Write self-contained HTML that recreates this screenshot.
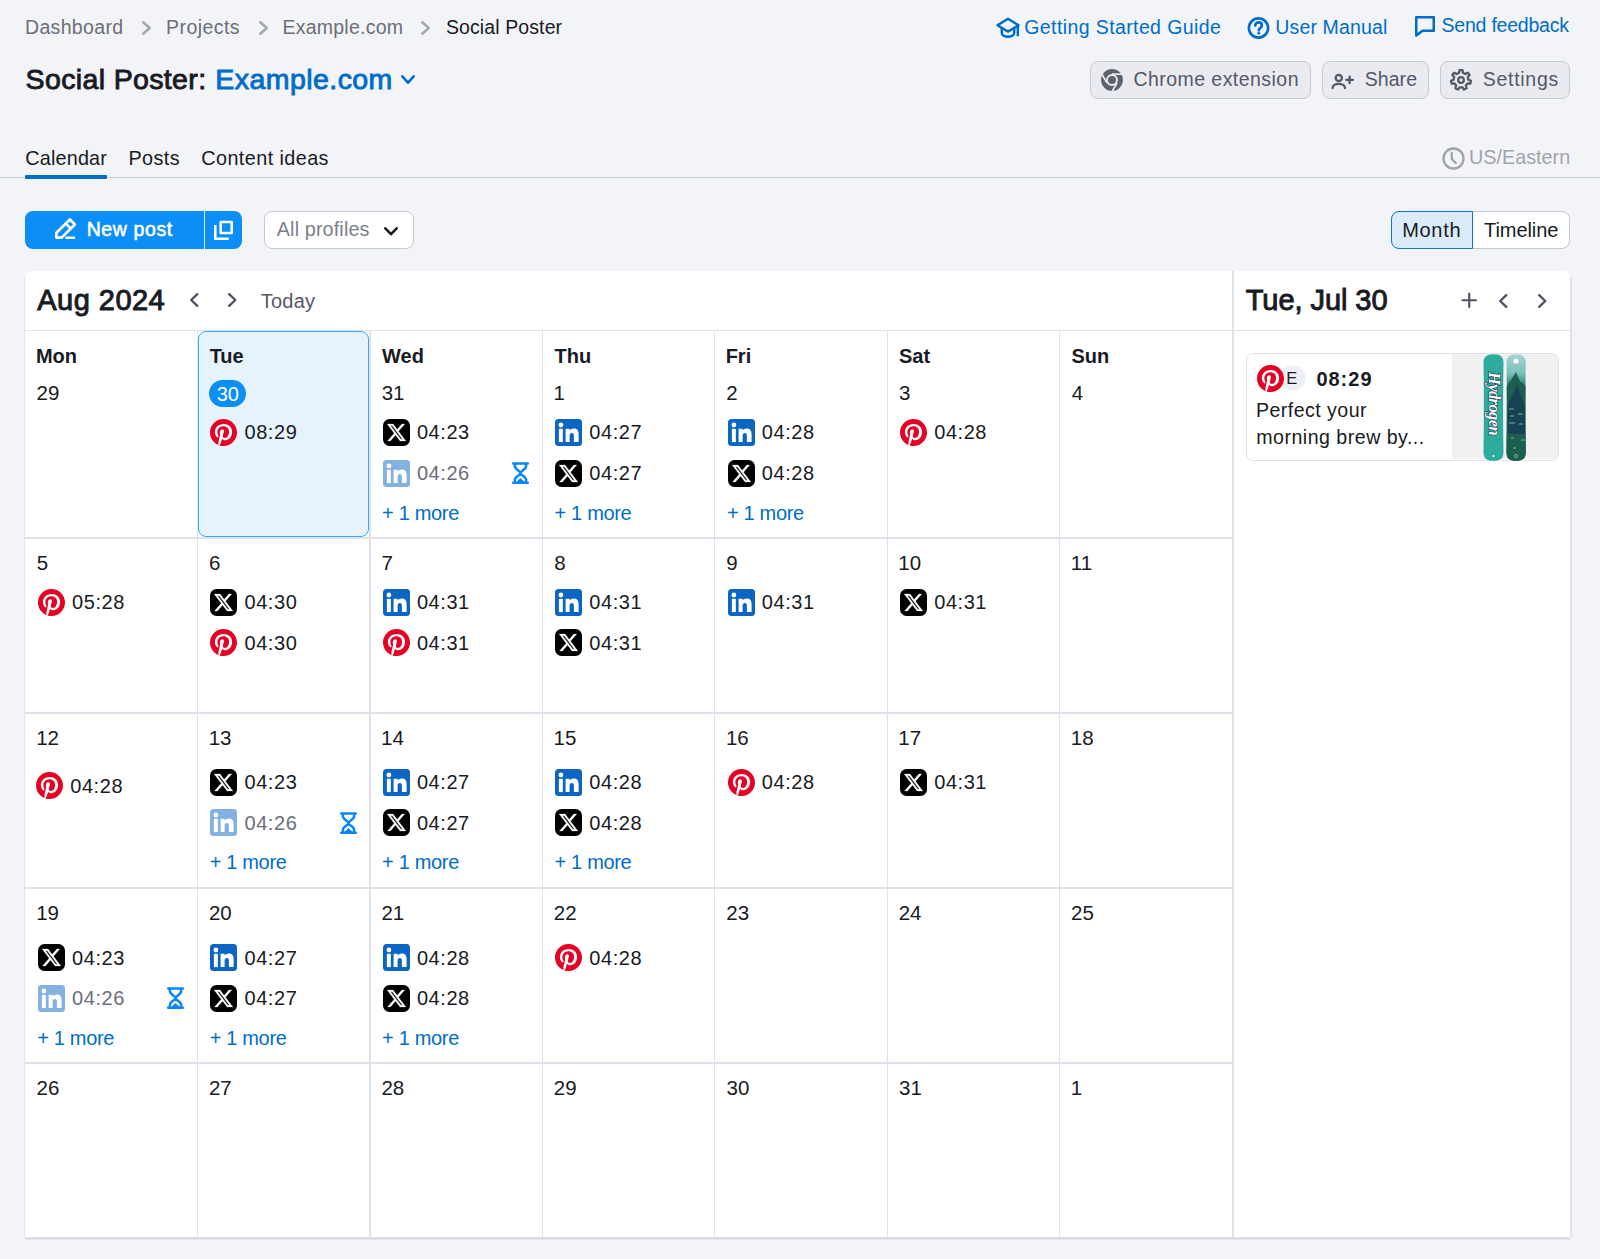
<!DOCTYPE html>
<html><head><meta charset="utf-8"><style>
html,body{margin:0;padding:0;}
body{width:1600px;height:1259px;position:relative;overflow:hidden;background:#f3f4f8;font-family:"Liberation Sans", sans-serif;}
svg{overflow:visible}
</style></head><body>
<svg style="position:absolute;left:142px;top:21px;" width="9" height="14" viewBox="0 0 9 14"><polyline points="1.25,1.25 7.75,7.00 1.25,12.75" fill="none" stroke="#a4a7b0" stroke-width="2.5" stroke-linecap="round" stroke-linejoin="round"/></svg>
<svg style="position:absolute;left:258.5px;top:21px;" width="9" height="14" viewBox="0 0 9 14"><polyline points="1.25,1.25 7.75,7.00 1.25,12.75" fill="none" stroke="#a4a7b0" stroke-width="2.5" stroke-linecap="round" stroke-linejoin="round"/></svg>
<svg style="position:absolute;left:421px;top:21px;" width="9" height="14" viewBox="0 0 9 14"><polyline points="1.25,1.25 7.75,7.00 1.25,12.75" fill="none" stroke="#a4a7b0" stroke-width="2.5" stroke-linecap="round" stroke-linejoin="round"/></svg>
<svg style="position:absolute;left:401px;top:75px;" width="14" height="9" viewBox="0 0 14 9"><polyline points="1.30,1.30 7.00,7.70 12.70,1.30" fill="none" stroke="#006dca" stroke-width="2.6" stroke-linecap="round" stroke-linejoin="round"/></svg>
<svg style="position:absolute;left:996px;top:17px;" width="24" height="21" viewBox="0 0 24 21"><g fill="none" stroke="#006dca" stroke-width="2.5" stroke-linejoin="round" stroke-linecap="round"><path d="M12 1.8L22.5 8.3 12 14.6 1.5 8.3z"/><path d="M5.8 11.2v4.6c0 2.3 2.8 3.9 6.2 3.9s6.2-1.6 6.2-3.9v-4.6"/><path d="M21.8 8.6v9.6"/></g></svg>
<svg style="position:absolute;left:1247px;top:17px;" width="23" height="22" viewBox="0 0 23 22"><g fill="none" stroke="#006dca" stroke-width="2.65" stroke-linecap="round"><circle cx="11.5" cy="11" r="9.6"/><path d="M8.3 8.6c0-1.9 1.5-3.2 3.3-3.2s3.3 1.2 3.3 3c0 2.4-3.1 2.5-3.1 4.9"/></g><circle cx="11.8" cy="16.3" r="1.4" fill="#006dca"/></svg>
<svg style="position:absolute;left:1415px;top:15.5px;" width="20" height="21" viewBox="0 0 20 21"><path d="M1.25 1.25h17.5v13.5H7.5L1.25 19.5z" fill="none" stroke="#006dca" stroke-width="2.5" stroke-linejoin="round"/></svg>
<div style="position:absolute;left:1090px;top:60.5px;width:221px;height:38px;background:#eaebf0;border:1.6px solid #c5c8d0;border-radius:8px;box-sizing:border-box;"></div>
<svg style="position:absolute;left:1101px;top:68.5px;" width="22" height="22" viewBox="0 0 22 22"><circle cx="11" cy="11" r="10.9" fill="#5e616d"/><circle cx="11" cy="11" r="5.9" fill="#eaebf0"/><circle cx="11" cy="11" r="4.0" fill="#5e616d"/><g stroke="#eaebf0" stroke-width="1.7" stroke-linecap="butt"><line x1="11" y1="5.15" x2="23" y2="5.15"/><line x1="16.07" y1="13.93" x2="10.07" y2="24.3"/><line x1="5.93" y1="13.93" x2="-0.07" y2="3.55"/></g></svg>
<div style="position:absolute;left:1321.5px;top:60.5px;width:107px;height:38px;background:#eaebf0;border:1.6px solid #c5c8d0;border-radius:8px;box-sizing:border-box;"></div>
<svg style="position:absolute;left:1331px;top:72.5px;" width="23" height="16" viewBox="0 0 23 16"><g fill="none" stroke="#555866" stroke-width="2.3" stroke-linecap="round"><circle cx="7.8" cy="4.9" r="3.1"/><path d="M1.6 15.2c0-2.6 2.7-4.3 6.2-4.3s6.2 1.7 6.2 4.3"/><path d="M18.6 3.6v6.6M15.3 6.9h6.6"/></g></svg>
<div style="position:absolute;left:1440.2px;top:60.5px;width:129.5px;height:38px;background:#eaebf0;border:1.6px solid #c5c8d0;border-radius:8px;box-sizing:border-box;"></div>
<svg style="position:absolute;left:1450px;top:68.5px;" width="22" height="22" viewBox="0 0 22 22"><g fill="none" stroke="#555866" stroke-width="2.3" stroke-linejoin="round"><polygon points="9.03,3.87 9.48,1.12 12.52,1.12 12.97,3.87 15.35,5.01 17.78,3.65 19.68,6.03 17.80,8.09 18.39,10.67 20.97,11.72 20.30,14.68 17.52,14.51 15.87,16.57 16.66,19.25 13.92,20.56 12.32,18.28 9.68,18.28 8.08,20.56 5.34,19.25 6.13,16.57 4.48,14.51 1.70,14.68 1.03,11.72 3.61,10.67 4.20,8.09 2.32,6.03 4.22,3.65 6.65,5.01"/><circle cx="11" cy="11" r="2.8"/></g></svg>
<div style="position:absolute;left:0px;top:177px;width:1600px;height:1.3px;background:#c9cbd3;"></div>
<div style="position:absolute;left:25.3px;top:175px;width:82px;height:3.6px;background:#006dca;border-radius:1px;"></div>
<svg style="position:absolute;left:1441.5px;top:146.5px;" width="23" height="23" viewBox="0 0 23 23"><g fill="none" stroke="#a0a3ad" stroke-width="2.3" stroke-linecap="round"><circle cx="11.5" cy="11.5" r="10"/><path d="M9.8 5.8v6.2l4 4"/></g></svg>
<div style="position:absolute;left:25px;top:210.5px;width:217px;height:38.5px;background:#0b8ff7;border-radius:8px;"></div>
<div style="position:absolute;left:203.5px;top:210.5px;width:1.3px;height:38.5px;background:#ffffff;opacity:0.9;"></div>
<svg style="position:absolute;left:54px;top:218px;" width="23" height="22" viewBox="0 0 23 22"><g fill="none" stroke="#fff" stroke-width="2.6" stroke-linejoin="round" stroke-linecap="round"><path d="M2.4 19.6v-4.9L15.9 1.5l5 5L7.6 19.6z"/><path d="M12.5 19.8h7.5"/><path d="M11.8 5.6l4.8 4.8"/></g></svg>
<svg style="position:absolute;left:213px;top:219.5px;" width="22" height="21" viewBox="0 0 22 21"><g fill="none" stroke="#fff" stroke-width="2.5" stroke-linejoin="round" stroke-linecap="square"><rect x="7.7" y="1.9" width="11" height="11"/><path d="M2.3 6.2v12.6h12.3"/></g></svg>
<div style="position:absolute;left:264px;top:210.5px;width:150px;height:38.5px;background:#fff;border:1.5px solid #c5c8d0;border-radius:8px;box-sizing:border-box;"></div>
<svg style="position:absolute;left:384.4px;top:227px;" width="14" height="8.5" viewBox="0 0 14 8.5"><polyline points="1.30,1.30 7.00,7.20 12.70,1.30" fill="none" stroke="#181b23" stroke-width="2.6" stroke-linecap="round" stroke-linejoin="round"/></svg>
<div style="position:absolute;left:1391px;top:210.5px;width:179px;height:38.5px;background:#fff;border:1.5px solid #c5c8d0;border-radius:8px;box-sizing:border-box;"></div>
<div style="position:absolute;left:1391px;top:210.5px;width:82px;height:38.5px;background:#dcebfa;border:1.8px solid #1a73d0;border-radius:8px 0 0 8px;box-sizing:border-box;"></div>
<div style="position:absolute;left:25px;top:1236.5px;width:1545px;height:3px;background:linear-gradient(#e2e3ea,#d8d9e1 50%,#eceef3);"></div>
<div style="position:absolute;left:23.8px;top:277px;width:1.5px;height:960px;background:#e4e5eb;"></div>
<div style="position:absolute;left:1569.8px;top:277px;width:1.8px;height:960px;background:#e1e2e9;"></div>
<div style="position:absolute;left:25px;top:271px;width:1545px;height:966px;background:#fff;border-radius:6px 6px 0 0;"></div>
<div style="position:absolute;left:25px;top:330px;width:1545px;height:1.3px;background:#e0e1e9;"></div>
<div style="position:absolute;left:1232.3px;top:271px;width:1.6px;height:966px;background:#e0e1e9;"></div>
<svg style="position:absolute;left:190px;top:293px;" width="8.5" height="14" viewBox="0 0 8.5 14"><polyline points="7.30,1.20 1.20,7.00 7.30,12.80" fill="none" stroke="#50535f" stroke-width="2.4" stroke-linecap="round" stroke-linejoin="round"/></svg>
<svg style="position:absolute;left:228px;top:293px;" width="8.5" height="14" viewBox="0 0 8.5 14"><polyline points="1.20,1.20 7.30,7.00 1.20,12.80" fill="none" stroke="#50535f" stroke-width="2.4" stroke-linecap="round" stroke-linejoin="round"/></svg>
<svg style="position:absolute;left:1461.5px;top:293px;" width="14.5" height="14.5" viewBox="0 0 14.5 14.5"><path d="M7.25 0.5v13.5M0.5 7.25h13.5" stroke="#50535f" stroke-width="2.2" stroke-linecap="round"/></svg>
<svg style="position:absolute;left:1499px;top:293.5px;" width="8.5" height="14" viewBox="0 0 8.5 14"><polyline points="7.30,1.20 1.20,7.00 7.30,12.80" fill="none" stroke="#50535f" stroke-width="2.4" stroke-linecap="round" stroke-linejoin="round"/></svg>
<svg style="position:absolute;left:1537.5px;top:293.5px;" width="8.5" height="14" viewBox="0 0 8.5 14"><polyline points="1.20,1.20 7.30,7.00 1.20,12.80" fill="none" stroke="#50535f" stroke-width="2.4" stroke-linecap="round" stroke-linejoin="round"/></svg>
<div style="position:absolute;left:196.78px;top:330px;width:1.3px;height:907px;background:#e0e1e9;"></div>
<div style="position:absolute;left:369.21000000000004px;top:330px;width:1.3px;height:907px;background:#e0e1e9;"></div>
<div style="position:absolute;left:541.64px;top:330px;width:1.3px;height:907px;background:#e0e1e9;"></div>
<div style="position:absolute;left:714.07px;top:330px;width:1.3px;height:907px;background:#e0e1e9;"></div>
<div style="position:absolute;left:886.5000000000001px;top:330px;width:1.3px;height:907px;background:#e0e1e9;"></div>
<div style="position:absolute;left:1058.9299999999998px;top:330px;width:1.3px;height:907px;background:#e0e1e9;"></div>
<div style="position:absolute;left:25px;top:537.35px;width:1207.5px;height:1.3px;background:#e0e1e9;"></div>
<div style="position:absolute;left:25px;top:712.35px;width:1207.5px;height:1.3px;background:#e0e1e9;"></div>
<div style="position:absolute;left:25px;top:887.35px;width:1207.5px;height:1.3px;background:#e0e1e9;"></div>
<div style="position:absolute;left:25px;top:1062.35px;width:1207.5px;height:1.3px;background:#e0e1e9;"></div>
<div style="position:absolute;left:198px;top:331px;width:171px;height:205.7px;background:#e7f3fc;border:1.8px solid #36aaf9;border-radius:8px;box-sizing:border-box;"></div>
<div style="position:absolute;left:209px;top:379.5px;width:37px;height:27.5px;background:#0b8ff7;border-radius:14px;"></div>
<svg style="position:absolute;left:210.43px;top:418.7px;" width="27" height="27" viewBox="0 0 24 24"><circle cx="12" cy="12" r="11.6" fill="#fff"/><path d="M12 0C5.373 0 0 5.372 0 12c0 5.084 3.163 9.426 7.627 11.174-.105-.949-.2-2.405.042-3.441.218-.937 1.407-5.965 1.407-5.965s-.359-.719-.359-1.782c0-1.668.967-2.914 2.171-2.914 1.023 0 1.518.769 1.518 1.69 0 1.029-.655 2.568-.994 3.995-.283 1.194.599 2.169 1.777 2.169 2.133 0 3.772-2.249 3.772-5.495 0-2.873-2.064-4.882-5.012-4.882-3.414 0-5.418 2.561-5.418 5.207 0 1.031.397 2.138.893 2.738a.36.36 0 01.083.345l-.333 1.36c-.053.22-.174.267-.402.161-1.499-.698-2.436-2.889-2.436-4.649 0-3.785 2.75-7.262 7.929-7.262 4.163 0 7.398 2.967 7.398 6.931 0 4.136-2.607 7.464-6.227 7.464-1.216 0-2.359-.632-2.75-1.378l-.748 2.853c-.271 1.043-1.002 2.35-1.492 3.146C9.57 23.812 10.763 24 12 24c6.627 0 12-5.373 12-12 0-6.628-5.373-12-12-12z" fill="#e60023"/></svg>
<svg style="position:absolute;left:382.86px;top:418.7px;" width="27" height="27" viewBox="0 0 27 27"><rect x="0" y="0" width="27" height="27" rx="6.5" fill="#000"/><g transform="translate(3.12 3.16) scale(0.862)"><path d="M18.244 2.25h3.308l-7.227 8.26 8.502 11.24H16.17l-5.214-6.817L4.99 21.75H1.68l7.73-8.835L1.254 2.25H8.08l4.713 6.231zm-1.161 17.52h1.833L7.084 4.126H5.117z" fill="#fff" stroke="#fff" stroke-width="0.35"/></g></svg>
<svg style="position:absolute;left:382.86px;top:459.7px;" width="27" height="27" viewBox="0 0 27 27"><g opacity="0.5"><rect x="0" y="0" width="27" height="27" rx="3.5" fill="#0a66c2"/><circle cx="5.9" cy="6.0" r="2.4" fill="#fff"/><rect x="3.9" y="9.8" width="3.95" height="13.3" fill="#fff"/><path d="M10.6 9.8h4v1.8c.6-1.1 2-2.1 4.1-2.1 4 0 4.9 2.6 4.9 6.1V23.1h-4.7v-6.2c0-1.5-.2-3-2-3s-2.3 1.4-2.3 3V23.1h-4z" fill="#fff"/></g></svg>
<svg style="position:absolute;left:511.98999999999995px;top:462.0px;" width="17" height="22" viewBox="0 0 17 22"><g fill="none" stroke="#0a86f6" stroke-width="2.5" stroke-linecap="round" stroke-linejoin="round"><path d="M1.2 1.5h14.6M1.2 20.8h14.6"/><path d="M2.9 2v2.4c0 2.6 5.6 4.6 5.6 6.6s-5.6 4-5.6 6.6V20.5M14.1 2v2.4c0 2.6-5.6 4.6-5.6 6.6s5.6 4 5.6 6.6V20.5"/><path d="M5.6 19.8l2.9-2.6 2.9 2.6z" fill="#0a86f6" stroke-width="1.6"/></g></svg>
<svg style="position:absolute;left:555.29px;top:418.7px;" width="27" height="27" viewBox="0 0 27 27"><g><rect x="0" y="0" width="27" height="27" rx="3.5" fill="#0a66c2"/><circle cx="5.9" cy="6.0" r="2.4" fill="#fff"/><rect x="3.9" y="9.8" width="3.95" height="13.3" fill="#fff"/><path d="M10.6 9.8h4v1.8c.6-1.1 2-2.1 4.1-2.1 4 0 4.9 2.6 4.9 6.1V23.1h-4.7v-6.2c0-1.5-.2-3-2-3s-2.3 1.4-2.3 3V23.1h-4z" fill="#fff"/></g></svg>
<svg style="position:absolute;left:555.29px;top:459.7px;" width="27" height="27" viewBox="0 0 27 27"><rect x="0" y="0" width="27" height="27" rx="6.5" fill="#000"/><g transform="translate(3.12 3.16) scale(0.862)"><path d="M18.244 2.25h3.308l-7.227 8.26 8.502 11.24H16.17l-5.214-6.817L4.99 21.75H1.68l7.73-8.835L1.254 2.25H8.08l4.713 6.231zm-1.161 17.52h1.833L7.084 4.126H5.117z" fill="#fff" stroke="#fff" stroke-width="0.35"/></g></svg>
<svg style="position:absolute;left:727.72px;top:418.7px;" width="27" height="27" viewBox="0 0 27 27"><g><rect x="0" y="0" width="27" height="27" rx="3.5" fill="#0a66c2"/><circle cx="5.9" cy="6.0" r="2.4" fill="#fff"/><rect x="3.9" y="9.8" width="3.95" height="13.3" fill="#fff"/><path d="M10.6 9.8h4v1.8c.6-1.1 2-2.1 4.1-2.1 4 0 4.9 2.6 4.9 6.1V23.1h-4.7v-6.2c0-1.5-.2-3-2-3s-2.3 1.4-2.3 3V23.1h-4z" fill="#fff"/></g></svg>
<svg style="position:absolute;left:727.72px;top:459.7px;" width="27" height="27" viewBox="0 0 27 27"><rect x="0" y="0" width="27" height="27" rx="6.5" fill="#000"/><g transform="translate(3.12 3.16) scale(0.862)"><path d="M18.244 2.25h3.308l-7.227 8.26 8.502 11.24H16.17l-5.214-6.817L4.99 21.75H1.68l7.73-8.835L1.254 2.25H8.08l4.713 6.231zm-1.161 17.52h1.833L7.084 4.126H5.117z" fill="#fff" stroke="#fff" stroke-width="0.35"/></g></svg>
<svg style="position:absolute;left:900.1500000000001px;top:418.7px;" width="27" height="27" viewBox="0 0 24 24"><circle cx="12" cy="12" r="11.6" fill="#fff"/><path d="M12 0C5.373 0 0 5.372 0 12c0 5.084 3.163 9.426 7.627 11.174-.105-.949-.2-2.405.042-3.441.218-.937 1.407-5.965 1.407-5.965s-.359-.719-.359-1.782c0-1.668.967-2.914 2.171-2.914 1.023 0 1.518.769 1.518 1.69 0 1.029-.655 2.568-.994 3.995-.283 1.194.599 2.169 1.777 2.169 2.133 0 3.772-2.249 3.772-5.495 0-2.873-2.064-4.882-5.012-4.882-3.414 0-5.418 2.561-5.418 5.207 0 1.031.397 2.138.893 2.738a.36.36 0 01.083.345l-.333 1.36c-.053.22-.174.267-.402.161-1.499-.698-2.436-2.889-2.436-4.649 0-3.785 2.75-7.262 7.929-7.262 4.163 0 7.398 2.967 7.398 6.931 0 4.136-2.607 7.464-6.227 7.464-1.216 0-2.359-.632-2.75-1.378l-.748 2.853c-.271 1.043-1.002 2.35-1.492 3.146C9.57 23.812 10.763 24 12 24c6.627 0 12-5.373 12-12 0-6.628-5.373-12-12-12z" fill="#e60023"/></svg>
<svg style="position:absolute;left:38.0px;top:588.6px;" width="27" height="27" viewBox="0 0 24 24"><circle cx="12" cy="12" r="11.6" fill="#fff"/><path d="M12 0C5.373 0 0 5.372 0 12c0 5.084 3.163 9.426 7.627 11.174-.105-.949-.2-2.405.042-3.441.218-.937 1.407-5.965 1.407-5.965s-.359-.719-.359-1.782c0-1.668.967-2.914 2.171-2.914 1.023 0 1.518.769 1.518 1.69 0 1.029-.655 2.568-.994 3.995-.283 1.194.599 2.169 1.777 2.169 2.133 0 3.772-2.249 3.772-5.495 0-2.873-2.064-4.882-5.012-4.882-3.414 0-5.418 2.561-5.418 5.207 0 1.031.397 2.138.893 2.738a.36.36 0 01.083.345l-.333 1.36c-.053.22-.174.267-.402.161-1.499-.698-2.436-2.889-2.436-4.649 0-3.785 2.75-7.262 7.929-7.262 4.163 0 7.398 2.967 7.398 6.931 0 4.136-2.607 7.464-6.227 7.464-1.216 0-2.359-.632-2.75-1.378l-.748 2.853c-.271 1.043-1.002 2.35-1.492 3.146C9.57 23.812 10.763 24 12 24c6.627 0 12-5.373 12-12 0-6.628-5.373-12-12-12z" fill="#e60023"/></svg>
<svg style="position:absolute;left:210.43px;top:588.6px;" width="27" height="27" viewBox="0 0 27 27"><rect x="0" y="0" width="27" height="27" rx="6.5" fill="#000"/><g transform="translate(3.12 3.16) scale(0.862)"><path d="M18.244 2.25h3.308l-7.227 8.26 8.502 11.24H16.17l-5.214-6.817L4.99 21.75H1.68l7.73-8.835L1.254 2.25H8.08l4.713 6.231zm-1.161 17.52h1.833L7.084 4.126H5.117z" fill="#fff" stroke="#fff" stroke-width="0.35"/></g></svg>
<svg style="position:absolute;left:210.43px;top:629.4px;" width="27" height="27" viewBox="0 0 24 24"><circle cx="12" cy="12" r="11.6" fill="#fff"/><path d="M12 0C5.373 0 0 5.372 0 12c0 5.084 3.163 9.426 7.627 11.174-.105-.949-.2-2.405.042-3.441.218-.937 1.407-5.965 1.407-5.965s-.359-.719-.359-1.782c0-1.668.967-2.914 2.171-2.914 1.023 0 1.518.769 1.518 1.69 0 1.029-.655 2.568-.994 3.995-.283 1.194.599 2.169 1.777 2.169 2.133 0 3.772-2.249 3.772-5.495 0-2.873-2.064-4.882-5.012-4.882-3.414 0-5.418 2.561-5.418 5.207 0 1.031.397 2.138.893 2.738a.36.36 0 01.083.345l-.333 1.36c-.053.22-.174.267-.402.161-1.499-.698-2.436-2.889-2.436-4.649 0-3.785 2.75-7.262 7.929-7.262 4.163 0 7.398 2.967 7.398 6.931 0 4.136-2.607 7.464-6.227 7.464-1.216 0-2.359-.632-2.75-1.378l-.748 2.853c-.271 1.043-1.002 2.35-1.492 3.146C9.57 23.812 10.763 24 12 24c6.627 0 12-5.373 12-12 0-6.628-5.373-12-12-12z" fill="#e60023"/></svg>
<svg style="position:absolute;left:382.86px;top:588.6px;" width="27" height="27" viewBox="0 0 27 27"><g><rect x="0" y="0" width="27" height="27" rx="3.5" fill="#0a66c2"/><circle cx="5.9" cy="6.0" r="2.4" fill="#fff"/><rect x="3.9" y="9.8" width="3.95" height="13.3" fill="#fff"/><path d="M10.6 9.8h4v1.8c.6-1.1 2-2.1 4.1-2.1 4 0 4.9 2.6 4.9 6.1V23.1h-4.7v-6.2c0-1.5-.2-3-2-3s-2.3 1.4-2.3 3V23.1h-4z" fill="#fff"/></g></svg>
<svg style="position:absolute;left:382.86px;top:629.4px;" width="27" height="27" viewBox="0 0 24 24"><circle cx="12" cy="12" r="11.6" fill="#fff"/><path d="M12 0C5.373 0 0 5.372 0 12c0 5.084 3.163 9.426 7.627 11.174-.105-.949-.2-2.405.042-3.441.218-.937 1.407-5.965 1.407-5.965s-.359-.719-.359-1.782c0-1.668.967-2.914 2.171-2.914 1.023 0 1.518.769 1.518 1.69 0 1.029-.655 2.568-.994 3.995-.283 1.194.599 2.169 1.777 2.169 2.133 0 3.772-2.249 3.772-5.495 0-2.873-2.064-4.882-5.012-4.882-3.414 0-5.418 2.561-5.418 5.207 0 1.031.397 2.138.893 2.738a.36.36 0 01.083.345l-.333 1.36c-.053.22-.174.267-.402.161-1.499-.698-2.436-2.889-2.436-4.649 0-3.785 2.75-7.262 7.929-7.262 4.163 0 7.398 2.967 7.398 6.931 0 4.136-2.607 7.464-6.227 7.464-1.216 0-2.359-.632-2.75-1.378l-.748 2.853c-.271 1.043-1.002 2.35-1.492 3.146C9.57 23.812 10.763 24 12 24c6.627 0 12-5.373 12-12 0-6.628-5.373-12-12-12z" fill="#e60023"/></svg>
<svg style="position:absolute;left:555.29px;top:588.6px;" width="27" height="27" viewBox="0 0 27 27"><g><rect x="0" y="0" width="27" height="27" rx="3.5" fill="#0a66c2"/><circle cx="5.9" cy="6.0" r="2.4" fill="#fff"/><rect x="3.9" y="9.8" width="3.95" height="13.3" fill="#fff"/><path d="M10.6 9.8h4v1.8c.6-1.1 2-2.1 4.1-2.1 4 0 4.9 2.6 4.9 6.1V23.1h-4.7v-6.2c0-1.5-.2-3-2-3s-2.3 1.4-2.3 3V23.1h-4z" fill="#fff"/></g></svg>
<svg style="position:absolute;left:555.29px;top:629.4px;" width="27" height="27" viewBox="0 0 27 27"><rect x="0" y="0" width="27" height="27" rx="6.5" fill="#000"/><g transform="translate(3.12 3.16) scale(0.862)"><path d="M18.244 2.25h3.308l-7.227 8.26 8.502 11.24H16.17l-5.214-6.817L4.99 21.75H1.68l7.73-8.835L1.254 2.25H8.08l4.713 6.231zm-1.161 17.52h1.833L7.084 4.126H5.117z" fill="#fff" stroke="#fff" stroke-width="0.35"/></g></svg>
<svg style="position:absolute;left:727.72px;top:588.6px;" width="27" height="27" viewBox="0 0 27 27"><g><rect x="0" y="0" width="27" height="27" rx="3.5" fill="#0a66c2"/><circle cx="5.9" cy="6.0" r="2.4" fill="#fff"/><rect x="3.9" y="9.8" width="3.95" height="13.3" fill="#fff"/><path d="M10.6 9.8h4v1.8c.6-1.1 2-2.1 4.1-2.1 4 0 4.9 2.6 4.9 6.1V23.1h-4.7v-6.2c0-1.5-.2-3-2-3s-2.3 1.4-2.3 3V23.1h-4z" fill="#fff"/></g></svg>
<svg style="position:absolute;left:900.1500000000001px;top:588.6px;" width="27" height="27" viewBox="0 0 27 27"><rect x="0" y="0" width="27" height="27" rx="6.5" fill="#000"/><g transform="translate(3.12 3.16) scale(0.862)"><path d="M18.244 2.25h3.308l-7.227 8.26 8.502 11.24H16.17l-5.214-6.817L4.99 21.75H1.68l7.73-8.835L1.254 2.25H8.08l4.713 6.231zm-1.161 17.52h1.833L7.084 4.126H5.117z" fill="#fff" stroke="#fff" stroke-width="0.35"/></g></svg>
<svg style="position:absolute;left:36.2px;top:772.4px;" width="27" height="27" viewBox="0 0 24 24"><circle cx="12" cy="12" r="11.6" fill="#fff"/><path d="M12 0C5.373 0 0 5.372 0 12c0 5.084 3.163 9.426 7.627 11.174-.105-.949-.2-2.405.042-3.441.218-.937 1.407-5.965 1.407-5.965s-.359-.719-.359-1.782c0-1.668.967-2.914 2.171-2.914 1.023 0 1.518.769 1.518 1.69 0 1.029-.655 2.568-.994 3.995-.283 1.194.599 2.169 1.777 2.169 2.133 0 3.772-2.249 3.772-5.495 0-2.873-2.064-4.882-5.012-4.882-3.414 0-5.418 2.561-5.418 5.207 0 1.031.397 2.138.893 2.738a.36.36 0 01.083.345l-.333 1.36c-.053.22-.174.267-.402.161-1.499-.698-2.436-2.889-2.436-4.649 0-3.785 2.75-7.262 7.929-7.262 4.163 0 7.398 2.967 7.398 6.931 0 4.136-2.607 7.464-6.227 7.464-1.216 0-2.359-.632-2.75-1.378l-.748 2.853c-.271 1.043-1.002 2.35-1.492 3.146C9.57 23.812 10.763 24 12 24c6.627 0 12-5.373 12-12 0-6.628-5.373-12-12-12z" fill="#e60023"/></svg>
<svg style="position:absolute;left:210.43px;top:768.5px;" width="27" height="27" viewBox="0 0 27 27"><rect x="0" y="0" width="27" height="27" rx="6.5" fill="#000"/><g transform="translate(3.12 3.16) scale(0.862)"><path d="M18.244 2.25h3.308l-7.227 8.26 8.502 11.24H16.17l-5.214-6.817L4.99 21.75H1.68l7.73-8.835L1.254 2.25H8.08l4.713 6.231zm-1.161 17.52h1.833L7.084 4.126H5.117z" fill="#fff" stroke="#fff" stroke-width="0.35"/></g></svg>
<svg style="position:absolute;left:210.43px;top:809.4px;" width="27" height="27" viewBox="0 0 27 27"><g opacity="0.5"><rect x="0" y="0" width="27" height="27" rx="3.5" fill="#0a66c2"/><circle cx="5.9" cy="6.0" r="2.4" fill="#fff"/><rect x="3.9" y="9.8" width="3.95" height="13.3" fill="#fff"/><path d="M10.6 9.8h4v1.8c.6-1.1 2-2.1 4.1-2.1 4 0 4.9 2.6 4.9 6.1V23.1h-4.7v-6.2c0-1.5-.2-3-2-3s-2.3 1.4-2.3 3V23.1h-4z" fill="#fff"/></g></svg>
<svg style="position:absolute;left:339.56px;top:811.6999999999999px;" width="17" height="22" viewBox="0 0 17 22"><g fill="none" stroke="#0a86f6" stroke-width="2.5" stroke-linecap="round" stroke-linejoin="round"><path d="M1.2 1.5h14.6M1.2 20.8h14.6"/><path d="M2.9 2v2.4c0 2.6 5.6 4.6 5.6 6.6s-5.6 4-5.6 6.6V20.5M14.1 2v2.4c0 2.6-5.6 4.6-5.6 6.6s5.6 4 5.6 6.6V20.5"/><path d="M5.6 19.8l2.9-2.6 2.9 2.6z" fill="#0a86f6" stroke-width="1.6"/></g></svg>
<svg style="position:absolute;left:382.86px;top:768.5px;" width="27" height="27" viewBox="0 0 27 27"><g><rect x="0" y="0" width="27" height="27" rx="3.5" fill="#0a66c2"/><circle cx="5.9" cy="6.0" r="2.4" fill="#fff"/><rect x="3.9" y="9.8" width="3.95" height="13.3" fill="#fff"/><path d="M10.6 9.8h4v1.8c.6-1.1 2-2.1 4.1-2.1 4 0 4.9 2.6 4.9 6.1V23.1h-4.7v-6.2c0-1.5-.2-3-2-3s-2.3 1.4-2.3 3V23.1h-4z" fill="#fff"/></g></svg>
<svg style="position:absolute;left:382.86px;top:809.4px;" width="27" height="27" viewBox="0 0 27 27"><rect x="0" y="0" width="27" height="27" rx="6.5" fill="#000"/><g transform="translate(3.12 3.16) scale(0.862)"><path d="M18.244 2.25h3.308l-7.227 8.26 8.502 11.24H16.17l-5.214-6.817L4.99 21.75H1.68l7.73-8.835L1.254 2.25H8.08l4.713 6.231zm-1.161 17.52h1.833L7.084 4.126H5.117z" fill="#fff" stroke="#fff" stroke-width="0.35"/></g></svg>
<svg style="position:absolute;left:555.29px;top:768.5px;" width="27" height="27" viewBox="0 0 27 27"><g><rect x="0" y="0" width="27" height="27" rx="3.5" fill="#0a66c2"/><circle cx="5.9" cy="6.0" r="2.4" fill="#fff"/><rect x="3.9" y="9.8" width="3.95" height="13.3" fill="#fff"/><path d="M10.6 9.8h4v1.8c.6-1.1 2-2.1 4.1-2.1 4 0 4.9 2.6 4.9 6.1V23.1h-4.7v-6.2c0-1.5-.2-3-2-3s-2.3 1.4-2.3 3V23.1h-4z" fill="#fff"/></g></svg>
<svg style="position:absolute;left:555.29px;top:809.4px;" width="27" height="27" viewBox="0 0 27 27"><rect x="0" y="0" width="27" height="27" rx="6.5" fill="#000"/><g transform="translate(3.12 3.16) scale(0.862)"><path d="M18.244 2.25h3.308l-7.227 8.26 8.502 11.24H16.17l-5.214-6.817L4.99 21.75H1.68l7.73-8.835L1.254 2.25H8.08l4.713 6.231zm-1.161 17.52h1.833L7.084 4.126H5.117z" fill="#fff" stroke="#fff" stroke-width="0.35"/></g></svg>
<svg style="position:absolute;left:727.72px;top:768.5px;" width="27" height="27" viewBox="0 0 24 24"><circle cx="12" cy="12" r="11.6" fill="#fff"/><path d="M12 0C5.373 0 0 5.372 0 12c0 5.084 3.163 9.426 7.627 11.174-.105-.949-.2-2.405.042-3.441.218-.937 1.407-5.965 1.407-5.965s-.359-.719-.359-1.782c0-1.668.967-2.914 2.171-2.914 1.023 0 1.518.769 1.518 1.69 0 1.029-.655 2.568-.994 3.995-.283 1.194.599 2.169 1.777 2.169 2.133 0 3.772-2.249 3.772-5.495 0-2.873-2.064-4.882-5.012-4.882-3.414 0-5.418 2.561-5.418 5.207 0 1.031.397 2.138.893 2.738a.36.36 0 01.083.345l-.333 1.36c-.053.22-.174.267-.402.161-1.499-.698-2.436-2.889-2.436-4.649 0-3.785 2.75-7.262 7.929-7.262 4.163 0 7.398 2.967 7.398 6.931 0 4.136-2.607 7.464-6.227 7.464-1.216 0-2.359-.632-2.75-1.378l-.748 2.853c-.271 1.043-1.002 2.35-1.492 3.146C9.57 23.812 10.763 24 12 24c6.627 0 12-5.373 12-12 0-6.628-5.373-12-12-12z" fill="#e60023"/></svg>
<svg style="position:absolute;left:900.1500000000001px;top:768.5px;" width="27" height="27" viewBox="0 0 27 27"><rect x="0" y="0" width="27" height="27" rx="6.5" fill="#000"/><g transform="translate(3.12 3.16) scale(0.862)"><path d="M18.244 2.25h3.308l-7.227 8.26 8.502 11.24H16.17l-5.214-6.817L4.99 21.75H1.68l7.73-8.835L1.254 2.25H8.08l4.713 6.231zm-1.161 17.52h1.833L7.084 4.126H5.117z" fill="#fff" stroke="#fff" stroke-width="0.35"/></g></svg>
<svg style="position:absolute;left:38.0px;top:943.8px;" width="27" height="27" viewBox="0 0 27 27"><rect x="0" y="0" width="27" height="27" rx="6.5" fill="#000"/><g transform="translate(3.12 3.16) scale(0.862)"><path d="M18.244 2.25h3.308l-7.227 8.26 8.502 11.24H16.17l-5.214-6.817L4.99 21.75H1.68l7.73-8.835L1.254 2.25H8.08l4.713 6.231zm-1.161 17.52h1.833L7.084 4.126H5.117z" fill="#fff" stroke="#fff" stroke-width="0.35"/></g></svg>
<svg style="position:absolute;left:38.0px;top:984.6px;" width="27" height="27" viewBox="0 0 27 27"><g opacity="0.5"><rect x="0" y="0" width="27" height="27" rx="3.5" fill="#0a66c2"/><circle cx="5.9" cy="6.0" r="2.4" fill="#fff"/><rect x="3.9" y="9.8" width="3.95" height="13.3" fill="#fff"/><path d="M10.6 9.8h4v1.8c.6-1.1 2-2.1 4.1-2.1 4 0 4.9 2.6 4.9 6.1V23.1h-4.7v-6.2c0-1.5-.2-3-2-3s-2.3 1.4-2.3 3V23.1h-4z" fill="#fff"/></g></svg>
<svg style="position:absolute;left:167.13px;top:986.9px;" width="17" height="22" viewBox="0 0 17 22"><g fill="none" stroke="#0a86f6" stroke-width="2.5" stroke-linecap="round" stroke-linejoin="round"><path d="M1.2 1.5h14.6M1.2 20.8h14.6"/><path d="M2.9 2v2.4c0 2.6 5.6 4.6 5.6 6.6s-5.6 4-5.6 6.6V20.5M14.1 2v2.4c0 2.6-5.6 4.6-5.6 6.6s5.6 4 5.6 6.6V20.5"/><path d="M5.6 19.8l2.9-2.6 2.9 2.6z" fill="#0a86f6" stroke-width="1.6"/></g></svg>
<svg style="position:absolute;left:210.43px;top:943.8px;" width="27" height="27" viewBox="0 0 27 27"><g><rect x="0" y="0" width="27" height="27" rx="3.5" fill="#0a66c2"/><circle cx="5.9" cy="6.0" r="2.4" fill="#fff"/><rect x="3.9" y="9.8" width="3.95" height="13.3" fill="#fff"/><path d="M10.6 9.8h4v1.8c.6-1.1 2-2.1 4.1-2.1 4 0 4.9 2.6 4.9 6.1V23.1h-4.7v-6.2c0-1.5-.2-3-2-3s-2.3 1.4-2.3 3V23.1h-4z" fill="#fff"/></g></svg>
<svg style="position:absolute;left:210.43px;top:984.6px;" width="27" height="27" viewBox="0 0 27 27"><rect x="0" y="0" width="27" height="27" rx="6.5" fill="#000"/><g transform="translate(3.12 3.16) scale(0.862)"><path d="M18.244 2.25h3.308l-7.227 8.26 8.502 11.24H16.17l-5.214-6.817L4.99 21.75H1.68l7.73-8.835L1.254 2.25H8.08l4.713 6.231zm-1.161 17.52h1.833L7.084 4.126H5.117z" fill="#fff" stroke="#fff" stroke-width="0.35"/></g></svg>
<svg style="position:absolute;left:382.86px;top:943.8px;" width="27" height="27" viewBox="0 0 27 27"><g><rect x="0" y="0" width="27" height="27" rx="3.5" fill="#0a66c2"/><circle cx="5.9" cy="6.0" r="2.4" fill="#fff"/><rect x="3.9" y="9.8" width="3.95" height="13.3" fill="#fff"/><path d="M10.6 9.8h4v1.8c.6-1.1 2-2.1 4.1-2.1 4 0 4.9 2.6 4.9 6.1V23.1h-4.7v-6.2c0-1.5-.2-3-2-3s-2.3 1.4-2.3 3V23.1h-4z" fill="#fff"/></g></svg>
<svg style="position:absolute;left:382.86px;top:984.6px;" width="27" height="27" viewBox="0 0 27 27"><rect x="0" y="0" width="27" height="27" rx="6.5" fill="#000"/><g transform="translate(3.12 3.16) scale(0.862)"><path d="M18.244 2.25h3.308l-7.227 8.26 8.502 11.24H16.17l-5.214-6.817L4.99 21.75H1.68l7.73-8.835L1.254 2.25H8.08l4.713 6.231zm-1.161 17.52h1.833L7.084 4.126H5.117z" fill="#fff" stroke="#fff" stroke-width="0.35"/></g></svg>
<svg style="position:absolute;left:555.29px;top:943.8px;" width="27" height="27" viewBox="0 0 24 24"><circle cx="12" cy="12" r="11.6" fill="#fff"/><path d="M12 0C5.373 0 0 5.372 0 12c0 5.084 3.163 9.426 7.627 11.174-.105-.949-.2-2.405.042-3.441.218-.937 1.407-5.965 1.407-5.965s-.359-.719-.359-1.782c0-1.668.967-2.914 2.171-2.914 1.023 0 1.518.769 1.518 1.69 0 1.029-.655 2.568-.994 3.995-.283 1.194.599 2.169 1.777 2.169 2.133 0 3.772-2.249 3.772-5.495 0-2.873-2.064-4.882-5.012-4.882-3.414 0-5.418 2.561-5.418 5.207 0 1.031.397 2.138.893 2.738a.36.36 0 01.083.345l-.333 1.36c-.053.22-.174.267-.402.161-1.499-.698-2.436-2.889-2.436-4.649 0-3.785 2.75-7.262 7.929-7.262 4.163 0 7.398 2.967 7.398 6.931 0 4.136-2.607 7.464-6.227 7.464-1.216 0-2.359-.632-2.75-1.378l-.748 2.853c-.271 1.043-1.002 2.35-1.492 3.146C9.57 23.812 10.763 24 12 24c6.627 0 12-5.373 12-12 0-6.628-5.373-12-12-12z" fill="#e60023"/></svg>
<div style="position:absolute;left:1245.5px;top:353px;width:313.5px;height:107.5px;background:#fff;border:1.3px solid #e0e1e9;border-radius:7px;box-sizing:border-box;overflow:hidden;"></div>
<div style="position:absolute;left:1452px;top:354.3px;width:105.7px;height:105px;background:#f1f1f1;border-radius:0 6px 6px 0;"></div>
<svg style="position:absolute;left:1280px;top:365px;" width="26" height="26" viewBox="0 0 26 26"><circle cx="13" cy="13" r="12.8" fill="#eef0f5"/></svg>
<svg style="position:absolute;left:1256.5px;top:364.5px;" width="27" height="27" viewBox="0 0 24 24"><circle cx="12" cy="12" r="11.6" fill="#fff"/><path d="M12 0C5.373 0 0 5.372 0 12c0 5.084 3.163 9.426 7.627 11.174-.105-.949-.2-2.405.042-3.441.218-.937 1.407-5.965 1.407-5.965s-.359-.719-.359-1.782c0-1.668.967-2.914 2.171-2.914 1.023 0 1.518.769 1.518 1.69 0 1.029-.655 2.568-.994 3.995-.283 1.194.599 2.169 1.777 2.169 2.133 0 3.772-2.249 3.772-5.495 0-2.873-2.064-4.882-5.012-4.882-3.414 0-5.418 2.561-5.418 5.207 0 1.031.397 2.138.893 2.738a.36.36 0 01.083.345l-.333 1.36c-.053.22-.174.267-.402.161-1.499-.698-2.436-2.889-2.436-4.649 0-3.785 2.75-7.262 7.929-7.262 4.163 0 7.398 2.967 7.398 6.931 0 4.136-2.607 7.464-6.227 7.464-1.216 0-2.359-.632-2.75-1.378l-.748 2.853c-.271 1.043-1.002 2.35-1.492 3.146C9.57 23.812 10.763 24 12 24c6.627 0 12-5.373 12-12 0-6.628-5.373-12-12-12z" fill="#e60023"/></svg>
<svg style="position:absolute;left:1483px;top:353.5px;" width="44" height="107" viewBox="0 0 44 107">
<defs>
<linearGradient id="g2" x1="0" y1="0" x2="0" y2="1"><stop offset="0" stop-color="#a9d3d6"/><stop offset="0.18" stop-color="#7cc0bb"/><stop offset="0.3" stop-color="#2f7f6e"/><stop offset="0.55" stop-color="#1b4f5a"/><stop offset="1" stop-color="#1d6148"/></linearGradient>
<clipPath id="b2"><path d="M23.5 9C23.5 3 26 0.2 33 0.2S42.8 3 42.8 9C42.3 40 42.3 67 42.8 98C42.8 104 40 106.8 33 106.8S23.5 104 23.5 98C24 67 24 40 23.5 9z"/></clipPath>
</defs>
<path d="M0.5 9C0.5 3 3 0.2 10.5 0.2S20.5 3 20.5 9C20 40 20 67 20.5 98C20.5 104 18 106.8 10.5 106.8S0.5 104 0.5 98C1 67 1 40 0.5 9z" fill="#2eab9c"/>
<g clip-path="url(#b2)">
<rect x="20" y="0" width="26" height="107" fill="url(#g2)"/>
<path d="M22 34L28 26L33 18L37 27L44 33V107H22z" fill="#1e5e50"/>
<path d="M25 50L30 40L34 30L38 42L42 52V80H25z" fill="#173e57" opacity="0.9"/>
<path d="M26 55h5M27 62h4M26 69h6M35 60h5M36 70h4M28 84h3M38 86h4M30 94h3" stroke="#5fc28e" stroke-width="1.2"/>
<circle cx="33" cy="7" r="2.6" fill="#f4fbfb"/>
<circle cx="33" cy="102" r="1.6" fill="none" stroke="#7fcf9e" stroke-width="0.8"/>
</g>
<text transform="translate(6.2 18) rotate(90)" font-family="Liberation Serif" font-style="italic" font-weight="700" font-size="16.5" fill="#fff" stroke="#1f3550" stroke-width="1.2" paint-order="stroke" letter-spacing="-0.6">Hydrogen</text>
<circle cx="10.5" cy="102" r="1" fill="#fff"/>
</svg>
<div style="position:absolute;left:24.98px;top:18.43px;font-size:19.5px;line-height:19.5px;font-weight:400;color:#6c6e79;letter-spacing:0.340px;white-space:nowrap;">Dashboard</div>
<div style="position:absolute;left:165.98px;top:18.43px;font-size:19.5px;line-height:19.5px;font-weight:400;color:#6c6e79;letter-spacing:0.456px;white-space:nowrap;">Projects</div>
<div style="position:absolute;left:282.48px;top:18.43px;font-size:19.5px;line-height:19.5px;font-weight:400;color:#6c6e79;letter-spacing:0.241px;white-space:nowrap;">Example.com</div>
<div style="position:absolute;left:445.89px;top:18.43px;font-size:19.5px;line-height:19.5px;font-weight:400;color:#181b23;letter-spacing:0.110px;white-space:nowrap;">Social Poster</div>
<div style="position:absolute;left:25.61px;top:65.28px;font-size:28.5px;line-height:28.5px;font-weight:400;color:#181b23;letter-spacing:0.357px;white-space:nowrap;-webkit-text-stroke:0.9px #181b23;">Social Poster:</div>
<div style="position:absolute;left:215.37px;top:64.98px;font-size:28.5px;line-height:28.5px;font-weight:400;color:#006dca;letter-spacing:0.436px;white-space:nowrap;-webkit-text-stroke:0.9px #006dca;">Example.com</div>
<div style="position:absolute;left:1024.29px;top:18.22px;font-size:19.5px;line-height:19.5px;font-weight:400;color:#006dca;letter-spacing:0.395px;white-space:nowrap;">Getting Started Guide</div>
<div style="position:absolute;left:1275.28px;top:17.93px;font-size:19.5px;line-height:19.5px;font-weight:400;color:#006dca;letter-spacing:0.146px;white-space:nowrap;">User Manual</div>
<div style="position:absolute;left:1441.59px;top:16.43px;font-size:19.5px;line-height:19.5px;font-weight:400;color:#006dca;letter-spacing:-0.225px;white-space:nowrap;">Send feedback</div>
<div style="position:absolute;left:1133.39px;top:70.12px;font-size:19.5px;line-height:19.5px;font-weight:400;color:#555866;letter-spacing:0.457px;white-space:nowrap;">Chrome extension</div>
<div style="position:absolute;left:1364.69px;top:70.12px;font-size:19.5px;line-height:19.5px;font-weight:400;color:#555866;letter-spacing:0.066px;white-space:nowrap;">Share</div>
<div style="position:absolute;left:1482.79px;top:70.12px;font-size:19.5px;line-height:19.5px;font-weight:400;color:#555866;letter-spacing:0.709px;white-space:nowrap;">Settings</div>
<div style="position:absolute;left:25.37px;top:148.57px;font-size:19.8px;line-height:19.8px;font-weight:400;color:#181b23;letter-spacing:0.168px;white-space:nowrap;">Calendar</div>
<div style="position:absolute;left:128.45px;top:148.57px;font-size:19.8px;line-height:19.8px;font-weight:400;color:#181b23;letter-spacing:0.412px;white-space:nowrap;">Posts</div>
<div style="position:absolute;left:201.27px;top:148.57px;font-size:19.8px;line-height:19.8px;font-weight:400;color:#181b23;letter-spacing:0.430px;white-space:nowrap;">Content ideas</div>
<div style="position:absolute;left:1468.96px;top:148.17px;font-size:19.8px;line-height:19.8px;font-weight:400;color:#a0a3ad;letter-spacing:0.012px;white-space:nowrap;">US/Eastern</div>
<div style="position:absolute;left:86.68px;top:220.12px;font-size:19.5px;line-height:19.5px;font-weight:400;color:#ffffff;letter-spacing:0.610px;white-space:nowrap;-webkit-text-stroke:0.55px #fff;">New post</div>
<div style="position:absolute;left:276.80px;top:220.37px;font-size:19.8px;line-height:19.8px;font-weight:400;color:#7c7f8b;letter-spacing:0.126px;white-space:nowrap;">All profiles</div>
<div style="position:absolute;left:1402.19px;top:220.40px;font-size:20px;line-height:20px;font-weight:400;color:#181b23;letter-spacing:0.687px;white-space:nowrap;">Month</div>
<div style="position:absolute;left:1484.09px;top:220.40px;font-size:20px;line-height:20px;font-weight:400;color:#181b23;letter-spacing:-0.087px;white-space:nowrap;">Timeline</div>
<div style="position:absolute;left:37.30px;top:285.85px;font-size:29px;line-height:29px;font-weight:400;color:#181b23;letter-spacing:0.465px;white-space:nowrap;-webkit-text-stroke:0.95px #181b23;">Aug 2024</div>
<div style="position:absolute;left:260.69px;top:290.50px;font-size:20px;line-height:20px;font-weight:400;color:#555866;letter-spacing:0.236px;white-space:nowrap;">Today</div>
<div style="position:absolute;left:1245.75px;top:285.85px;font-size:29px;line-height:29px;font-weight:400;color:#181b23;letter-spacing:-0.062px;white-space:nowrap;-webkit-text-stroke:0.95px #181b23;">Tue, Jul 30</div>
<div style="position:absolute;left:35.95px;top:345.50px;font-size:20px;line-height:20px;font-weight:700;color:#181b23;letter-spacing:0.000px;white-space:nowrap;">Mon</div>
<div style="position:absolute;left:209.63px;top:345.50px;font-size:20px;line-height:20px;font-weight:700;color:#181b23;letter-spacing:0.000px;white-space:nowrap;">Tue</div>
<div style="position:absolute;left:382.06px;top:345.50px;font-size:20px;line-height:20px;font-weight:700;color:#181b23;letter-spacing:0.000px;white-space:nowrap;">Wed</div>
<div style="position:absolute;left:554.49px;top:345.50px;font-size:20px;line-height:20px;font-weight:700;color:#181b23;letter-spacing:0.000px;white-space:nowrap;">Thu</div>
<div style="position:absolute;left:725.67px;top:345.50px;font-size:20px;line-height:20px;font-weight:700;color:#181b23;letter-spacing:0.000px;white-space:nowrap;">Fri</div>
<div style="position:absolute;left:899.04px;top:345.50px;font-size:20px;line-height:20px;font-weight:700;color:#181b23;letter-spacing:0.000px;white-space:nowrap;">Sat</div>
<div style="position:absolute;left:1071.47px;top:345.50px;font-size:20px;line-height:20px;font-weight:700;color:#181b23;letter-spacing:0.000px;white-space:nowrap;">Sun</div>
<div style="position:absolute;left:36.54px;top:383.07px;font-size:20.5px;line-height:20.5px;font-weight:400;color:#181b23;letter-spacing:0.000px;white-space:nowrap;">29</div>
<div style="position:absolute;left:216.68px;top:383.50px;font-size:20px;line-height:20px;font-weight:400;color:#fff;letter-spacing:0.000px;white-space:nowrap;">30</div>
<div style="position:absolute;left:381.72px;top:383.07px;font-size:20.5px;line-height:20.5px;font-weight:400;color:#181b23;letter-spacing:0.000px;white-space:nowrap;">31</div>
<div style="position:absolute;left:553.51px;top:383.07px;font-size:20.5px;line-height:20.5px;font-weight:400;color:#181b23;letter-spacing:0.000px;white-space:nowrap;">1</div>
<div style="position:absolute;left:726.26px;top:383.07px;font-size:20.5px;line-height:20.5px;font-weight:400;color:#181b23;letter-spacing:0.000px;white-space:nowrap;">2</div>
<div style="position:absolute;left:899.01px;top:383.07px;font-size:20.5px;line-height:20.5px;font-weight:400;color:#181b23;letter-spacing:0.000px;white-space:nowrap;">3</div>
<div style="position:absolute;left:1071.76px;top:383.07px;font-size:20.5px;line-height:20.5px;font-weight:400;color:#181b23;letter-spacing:0.000px;white-space:nowrap;">4</div>
<div style="position:absolute;left:36.86px;top:553.08px;font-size:20.5px;line-height:20.5px;font-weight:400;color:#181b23;letter-spacing:0.000px;white-space:nowrap;">5</div>
<div style="position:absolute;left:208.97px;top:553.08px;font-size:20.5px;line-height:20.5px;font-weight:400;color:#181b23;letter-spacing:0.000px;white-space:nowrap;">6</div>
<div style="position:absolute;left:381.40px;top:553.08px;font-size:20.5px;line-height:20.5px;font-weight:400;color:#181b23;letter-spacing:0.000px;white-space:nowrap;">7</div>
<div style="position:absolute;left:554.15px;top:553.08px;font-size:20.5px;line-height:20.5px;font-weight:400;color:#181b23;letter-spacing:0.000px;white-space:nowrap;">8</div>
<div style="position:absolute;left:726.26px;top:553.08px;font-size:20.5px;line-height:20.5px;font-weight:400;color:#181b23;letter-spacing:0.000px;white-space:nowrap;">9</div>
<div style="position:absolute;left:898.37px;top:553.08px;font-size:20.5px;line-height:20.5px;font-weight:400;color:#181b23;letter-spacing:0.000px;white-space:nowrap;">10</div>
<div style="position:absolute;left:1070.80px;top:553.08px;font-size:20.5px;line-height:20.5px;font-weight:400;color:#181b23;letter-spacing:0.000px;white-space:nowrap;">11</div>
<div style="position:absolute;left:36.22px;top:727.58px;font-size:20.5px;line-height:20.5px;font-weight:400;color:#181b23;letter-spacing:0.000px;white-space:nowrap;">12</div>
<div style="position:absolute;left:208.65px;top:727.58px;font-size:20.5px;line-height:20.5px;font-weight:400;color:#181b23;letter-spacing:0.000px;white-space:nowrap;">13</div>
<div style="position:absolute;left:381.08px;top:727.58px;font-size:20.5px;line-height:20.5px;font-weight:400;color:#181b23;letter-spacing:0.000px;white-space:nowrap;">14</div>
<div style="position:absolute;left:553.51px;top:727.58px;font-size:20.5px;line-height:20.5px;font-weight:400;color:#181b23;letter-spacing:0.000px;white-space:nowrap;">15</div>
<div style="position:absolute;left:725.94px;top:727.58px;font-size:20.5px;line-height:20.5px;font-weight:400;color:#181b23;letter-spacing:0.000px;white-space:nowrap;">16</div>
<div style="position:absolute;left:898.37px;top:727.58px;font-size:20.5px;line-height:20.5px;font-weight:400;color:#181b23;letter-spacing:0.000px;white-space:nowrap;">17</div>
<div style="position:absolute;left:1070.80px;top:727.58px;font-size:20.5px;line-height:20.5px;font-weight:400;color:#181b23;letter-spacing:0.000px;white-space:nowrap;">18</div>
<div style="position:absolute;left:36.22px;top:903.08px;font-size:20.5px;line-height:20.5px;font-weight:400;color:#181b23;letter-spacing:0.000px;white-space:nowrap;">19</div>
<div style="position:absolute;left:208.97px;top:903.08px;font-size:20.5px;line-height:20.5px;font-weight:400;color:#181b23;letter-spacing:0.000px;white-space:nowrap;">20</div>
<div style="position:absolute;left:381.40px;top:903.08px;font-size:20.5px;line-height:20.5px;font-weight:400;color:#181b23;letter-spacing:0.000px;white-space:nowrap;">21</div>
<div style="position:absolute;left:553.83px;top:903.08px;font-size:20.5px;line-height:20.5px;font-weight:400;color:#181b23;letter-spacing:0.000px;white-space:nowrap;">22</div>
<div style="position:absolute;left:726.26px;top:903.08px;font-size:20.5px;line-height:20.5px;font-weight:400;color:#181b23;letter-spacing:0.000px;white-space:nowrap;">23</div>
<div style="position:absolute;left:898.69px;top:903.08px;font-size:20.5px;line-height:20.5px;font-weight:400;color:#181b23;letter-spacing:0.000px;white-space:nowrap;">24</div>
<div style="position:absolute;left:1071.12px;top:903.08px;font-size:20.5px;line-height:20.5px;font-weight:400;color:#181b23;letter-spacing:0.000px;white-space:nowrap;">25</div>
<div style="position:absolute;left:36.54px;top:1077.58px;font-size:20.5px;line-height:20.5px;font-weight:400;color:#181b23;letter-spacing:0.000px;white-space:nowrap;">26</div>
<div style="position:absolute;left:208.97px;top:1077.58px;font-size:20.5px;line-height:20.5px;font-weight:400;color:#181b23;letter-spacing:0.000px;white-space:nowrap;">27</div>
<div style="position:absolute;left:381.40px;top:1077.58px;font-size:20.5px;line-height:20.5px;font-weight:400;color:#181b23;letter-spacing:0.000px;white-space:nowrap;">28</div>
<div style="position:absolute;left:553.83px;top:1077.58px;font-size:20.5px;line-height:20.5px;font-weight:400;color:#181b23;letter-spacing:0.000px;white-space:nowrap;">29</div>
<div style="position:absolute;left:726.58px;top:1077.58px;font-size:20.5px;line-height:20.5px;font-weight:400;color:#181b23;letter-spacing:0.000px;white-space:nowrap;">30</div>
<div style="position:absolute;left:899.01px;top:1077.58px;font-size:20.5px;line-height:20.5px;font-weight:400;color:#181b23;letter-spacing:0.000px;white-space:nowrap;">31</div>
<div style="position:absolute;left:1070.80px;top:1077.58px;font-size:20.5px;line-height:20.5px;font-weight:400;color:#181b23;letter-spacing:0.000px;white-space:nowrap;">1</div>
<div style="position:absolute;left:244.50px;top:422.40px;font-size:20px;line-height:20px;font-weight:400;color:#181b23;letter-spacing:0.000px;white-space:nowrap;letter-spacing:0.55px;">08:29</div>
<div style="position:absolute;left:416.94px;top:422.40px;font-size:20px;line-height:20px;font-weight:400;color:#181b23;letter-spacing:0.000px;white-space:nowrap;letter-spacing:0.55px;">04:23</div>
<div style="position:absolute;left:416.94px;top:463.40px;font-size:20px;line-height:20px;font-weight:400;color:#6b6e7a;letter-spacing:0.000px;white-space:nowrap;letter-spacing:0.55px;">04:26</div>
<div style="position:absolute;left:382.12px;top:502.50px;font-size:20px;line-height:20px;font-weight:400;color:#006dca;letter-spacing:-0.333px;white-space:nowrap;">+ 1 more</div>
<div style="position:absolute;left:589.37px;top:422.40px;font-size:20px;line-height:20px;font-weight:400;color:#181b23;letter-spacing:0.000px;white-space:nowrap;letter-spacing:0.55px;">04:27</div>
<div style="position:absolute;left:589.37px;top:463.40px;font-size:20px;line-height:20px;font-weight:400;color:#181b23;letter-spacing:0.000px;white-space:nowrap;letter-spacing:0.55px;">04:27</div>
<div style="position:absolute;left:554.55px;top:502.50px;font-size:20px;line-height:20px;font-weight:400;color:#006dca;letter-spacing:-0.333px;white-space:nowrap;">+ 1 more</div>
<div style="position:absolute;left:761.80px;top:422.40px;font-size:20px;line-height:20px;font-weight:400;color:#181b23;letter-spacing:0.000px;white-space:nowrap;letter-spacing:0.55px;">04:28</div>
<div style="position:absolute;left:761.80px;top:463.40px;font-size:20px;line-height:20px;font-weight:400;color:#181b23;letter-spacing:0.000px;white-space:nowrap;letter-spacing:0.55px;">04:28</div>
<div style="position:absolute;left:726.98px;top:502.50px;font-size:20px;line-height:20px;font-weight:400;color:#006dca;letter-spacing:-0.333px;white-space:nowrap;">+ 1 more</div>
<div style="position:absolute;left:934.23px;top:422.40px;font-size:20px;line-height:20px;font-weight:400;color:#181b23;letter-spacing:0.000px;white-space:nowrap;letter-spacing:0.55px;">04:28</div>
<div style="position:absolute;left:72.08px;top:592.30px;font-size:20px;line-height:20px;font-weight:400;color:#181b23;letter-spacing:0.000px;white-space:nowrap;letter-spacing:0.55px;">05:28</div>
<div style="position:absolute;left:244.50px;top:592.30px;font-size:20px;line-height:20px;font-weight:400;color:#181b23;letter-spacing:0.000px;white-space:nowrap;letter-spacing:0.55px;">04:30</div>
<div style="position:absolute;left:244.50px;top:633.10px;font-size:20px;line-height:20px;font-weight:400;color:#181b23;letter-spacing:0.000px;white-space:nowrap;letter-spacing:0.55px;">04:30</div>
<div style="position:absolute;left:416.94px;top:592.30px;font-size:20px;line-height:20px;font-weight:400;color:#181b23;letter-spacing:0.000px;white-space:nowrap;letter-spacing:0.55px;">04:31</div>
<div style="position:absolute;left:416.94px;top:633.10px;font-size:20px;line-height:20px;font-weight:400;color:#181b23;letter-spacing:0.000px;white-space:nowrap;letter-spacing:0.55px;">04:31</div>
<div style="position:absolute;left:589.37px;top:592.30px;font-size:20px;line-height:20px;font-weight:400;color:#181b23;letter-spacing:0.000px;white-space:nowrap;letter-spacing:0.55px;">04:31</div>
<div style="position:absolute;left:589.37px;top:633.10px;font-size:20px;line-height:20px;font-weight:400;color:#181b23;letter-spacing:0.000px;white-space:nowrap;letter-spacing:0.55px;">04:31</div>
<div style="position:absolute;left:761.80px;top:592.30px;font-size:20px;line-height:20px;font-weight:400;color:#181b23;letter-spacing:0.000px;white-space:nowrap;letter-spacing:0.55px;">04:31</div>
<div style="position:absolute;left:934.23px;top:592.30px;font-size:20px;line-height:20px;font-weight:400;color:#181b23;letter-spacing:0.000px;white-space:nowrap;letter-spacing:0.55px;">04:31</div>
<div style="position:absolute;left:70.28px;top:776.10px;font-size:20px;line-height:20px;font-weight:400;color:#181b23;letter-spacing:0.000px;white-space:nowrap;letter-spacing:0.55px;">04:28</div>
<div style="position:absolute;left:244.50px;top:772.20px;font-size:20px;line-height:20px;font-weight:400;color:#181b23;letter-spacing:0.000px;white-space:nowrap;letter-spacing:0.55px;">04:23</div>
<div style="position:absolute;left:244.50px;top:813.10px;font-size:20px;line-height:20px;font-weight:400;color:#6b6e7a;letter-spacing:0.000px;white-space:nowrap;letter-spacing:0.55px;">04:26</div>
<div style="position:absolute;left:209.69px;top:852.10px;font-size:20px;line-height:20px;font-weight:400;color:#006dca;letter-spacing:-0.333px;white-space:nowrap;">+ 1 more</div>
<div style="position:absolute;left:416.94px;top:772.20px;font-size:20px;line-height:20px;font-weight:400;color:#181b23;letter-spacing:0.000px;white-space:nowrap;letter-spacing:0.55px;">04:27</div>
<div style="position:absolute;left:416.94px;top:813.10px;font-size:20px;line-height:20px;font-weight:400;color:#181b23;letter-spacing:0.000px;white-space:nowrap;letter-spacing:0.55px;">04:27</div>
<div style="position:absolute;left:382.12px;top:852.10px;font-size:20px;line-height:20px;font-weight:400;color:#006dca;letter-spacing:-0.333px;white-space:nowrap;">+ 1 more</div>
<div style="position:absolute;left:589.37px;top:772.20px;font-size:20px;line-height:20px;font-weight:400;color:#181b23;letter-spacing:0.000px;white-space:nowrap;letter-spacing:0.55px;">04:28</div>
<div style="position:absolute;left:589.37px;top:813.10px;font-size:20px;line-height:20px;font-weight:400;color:#181b23;letter-spacing:0.000px;white-space:nowrap;letter-spacing:0.55px;">04:28</div>
<div style="position:absolute;left:554.55px;top:852.10px;font-size:20px;line-height:20px;font-weight:400;color:#006dca;letter-spacing:-0.333px;white-space:nowrap;">+ 1 more</div>
<div style="position:absolute;left:761.80px;top:772.20px;font-size:20px;line-height:20px;font-weight:400;color:#181b23;letter-spacing:0.000px;white-space:nowrap;letter-spacing:0.55px;">04:28</div>
<div style="position:absolute;left:934.23px;top:772.20px;font-size:20px;line-height:20px;font-weight:400;color:#181b23;letter-spacing:0.000px;white-space:nowrap;letter-spacing:0.55px;">04:31</div>
<div style="position:absolute;left:72.08px;top:947.50px;font-size:20px;line-height:20px;font-weight:400;color:#181b23;letter-spacing:0.000px;white-space:nowrap;letter-spacing:0.55px;">04:23</div>
<div style="position:absolute;left:72.08px;top:988.30px;font-size:20px;line-height:20px;font-weight:400;color:#6b6e7a;letter-spacing:0.000px;white-space:nowrap;letter-spacing:0.55px;">04:26</div>
<div style="position:absolute;left:37.26px;top:1027.50px;font-size:20px;line-height:20px;font-weight:400;color:#006dca;letter-spacing:-0.333px;white-space:nowrap;">+ 1 more</div>
<div style="position:absolute;left:244.50px;top:947.50px;font-size:20px;line-height:20px;font-weight:400;color:#181b23;letter-spacing:0.000px;white-space:nowrap;letter-spacing:0.55px;">04:27</div>
<div style="position:absolute;left:244.50px;top:988.30px;font-size:20px;line-height:20px;font-weight:400;color:#181b23;letter-spacing:0.000px;white-space:nowrap;letter-spacing:0.55px;">04:27</div>
<div style="position:absolute;left:209.69px;top:1027.50px;font-size:20px;line-height:20px;font-weight:400;color:#006dca;letter-spacing:-0.333px;white-space:nowrap;">+ 1 more</div>
<div style="position:absolute;left:416.94px;top:947.50px;font-size:20px;line-height:20px;font-weight:400;color:#181b23;letter-spacing:0.000px;white-space:nowrap;letter-spacing:0.55px;">04:28</div>
<div style="position:absolute;left:416.94px;top:988.30px;font-size:20px;line-height:20px;font-weight:400;color:#181b23;letter-spacing:0.000px;white-space:nowrap;letter-spacing:0.55px;">04:28</div>
<div style="position:absolute;left:382.12px;top:1027.50px;font-size:20px;line-height:20px;font-weight:400;color:#006dca;letter-spacing:-0.333px;white-space:nowrap;">+ 1 more</div>
<div style="position:absolute;left:589.37px;top:947.50px;font-size:20px;line-height:20px;font-weight:400;color:#181b23;letter-spacing:0.000px;white-space:nowrap;letter-spacing:0.55px;">04:28</div>
<div style="position:absolute;left:1286.21px;top:369.98px;font-size:16.5px;line-height:16.5px;font-weight:400;color:#181b23;letter-spacing:0.000px;white-space:nowrap;">E</div>
<div style="position:absolute;left:1316.38px;top:368.50px;font-size:20px;line-height:20px;font-weight:700;color:#181b23;letter-spacing:0.993px;white-space:nowrap;">08:29</div>
<div style="position:absolute;left:1255.97px;top:400.84px;font-size:19.6px;line-height:19.6px;font-weight:400;color:#181b23;letter-spacing:0.451px;white-space:nowrap;">Perfect your</div>
<div style="position:absolute;left:1256.28px;top:427.84px;font-size:19.6px;line-height:19.6px;font-weight:400;color:#181b23;letter-spacing:0.484px;white-space:nowrap;">morning brew by...</div>
</body></html>
